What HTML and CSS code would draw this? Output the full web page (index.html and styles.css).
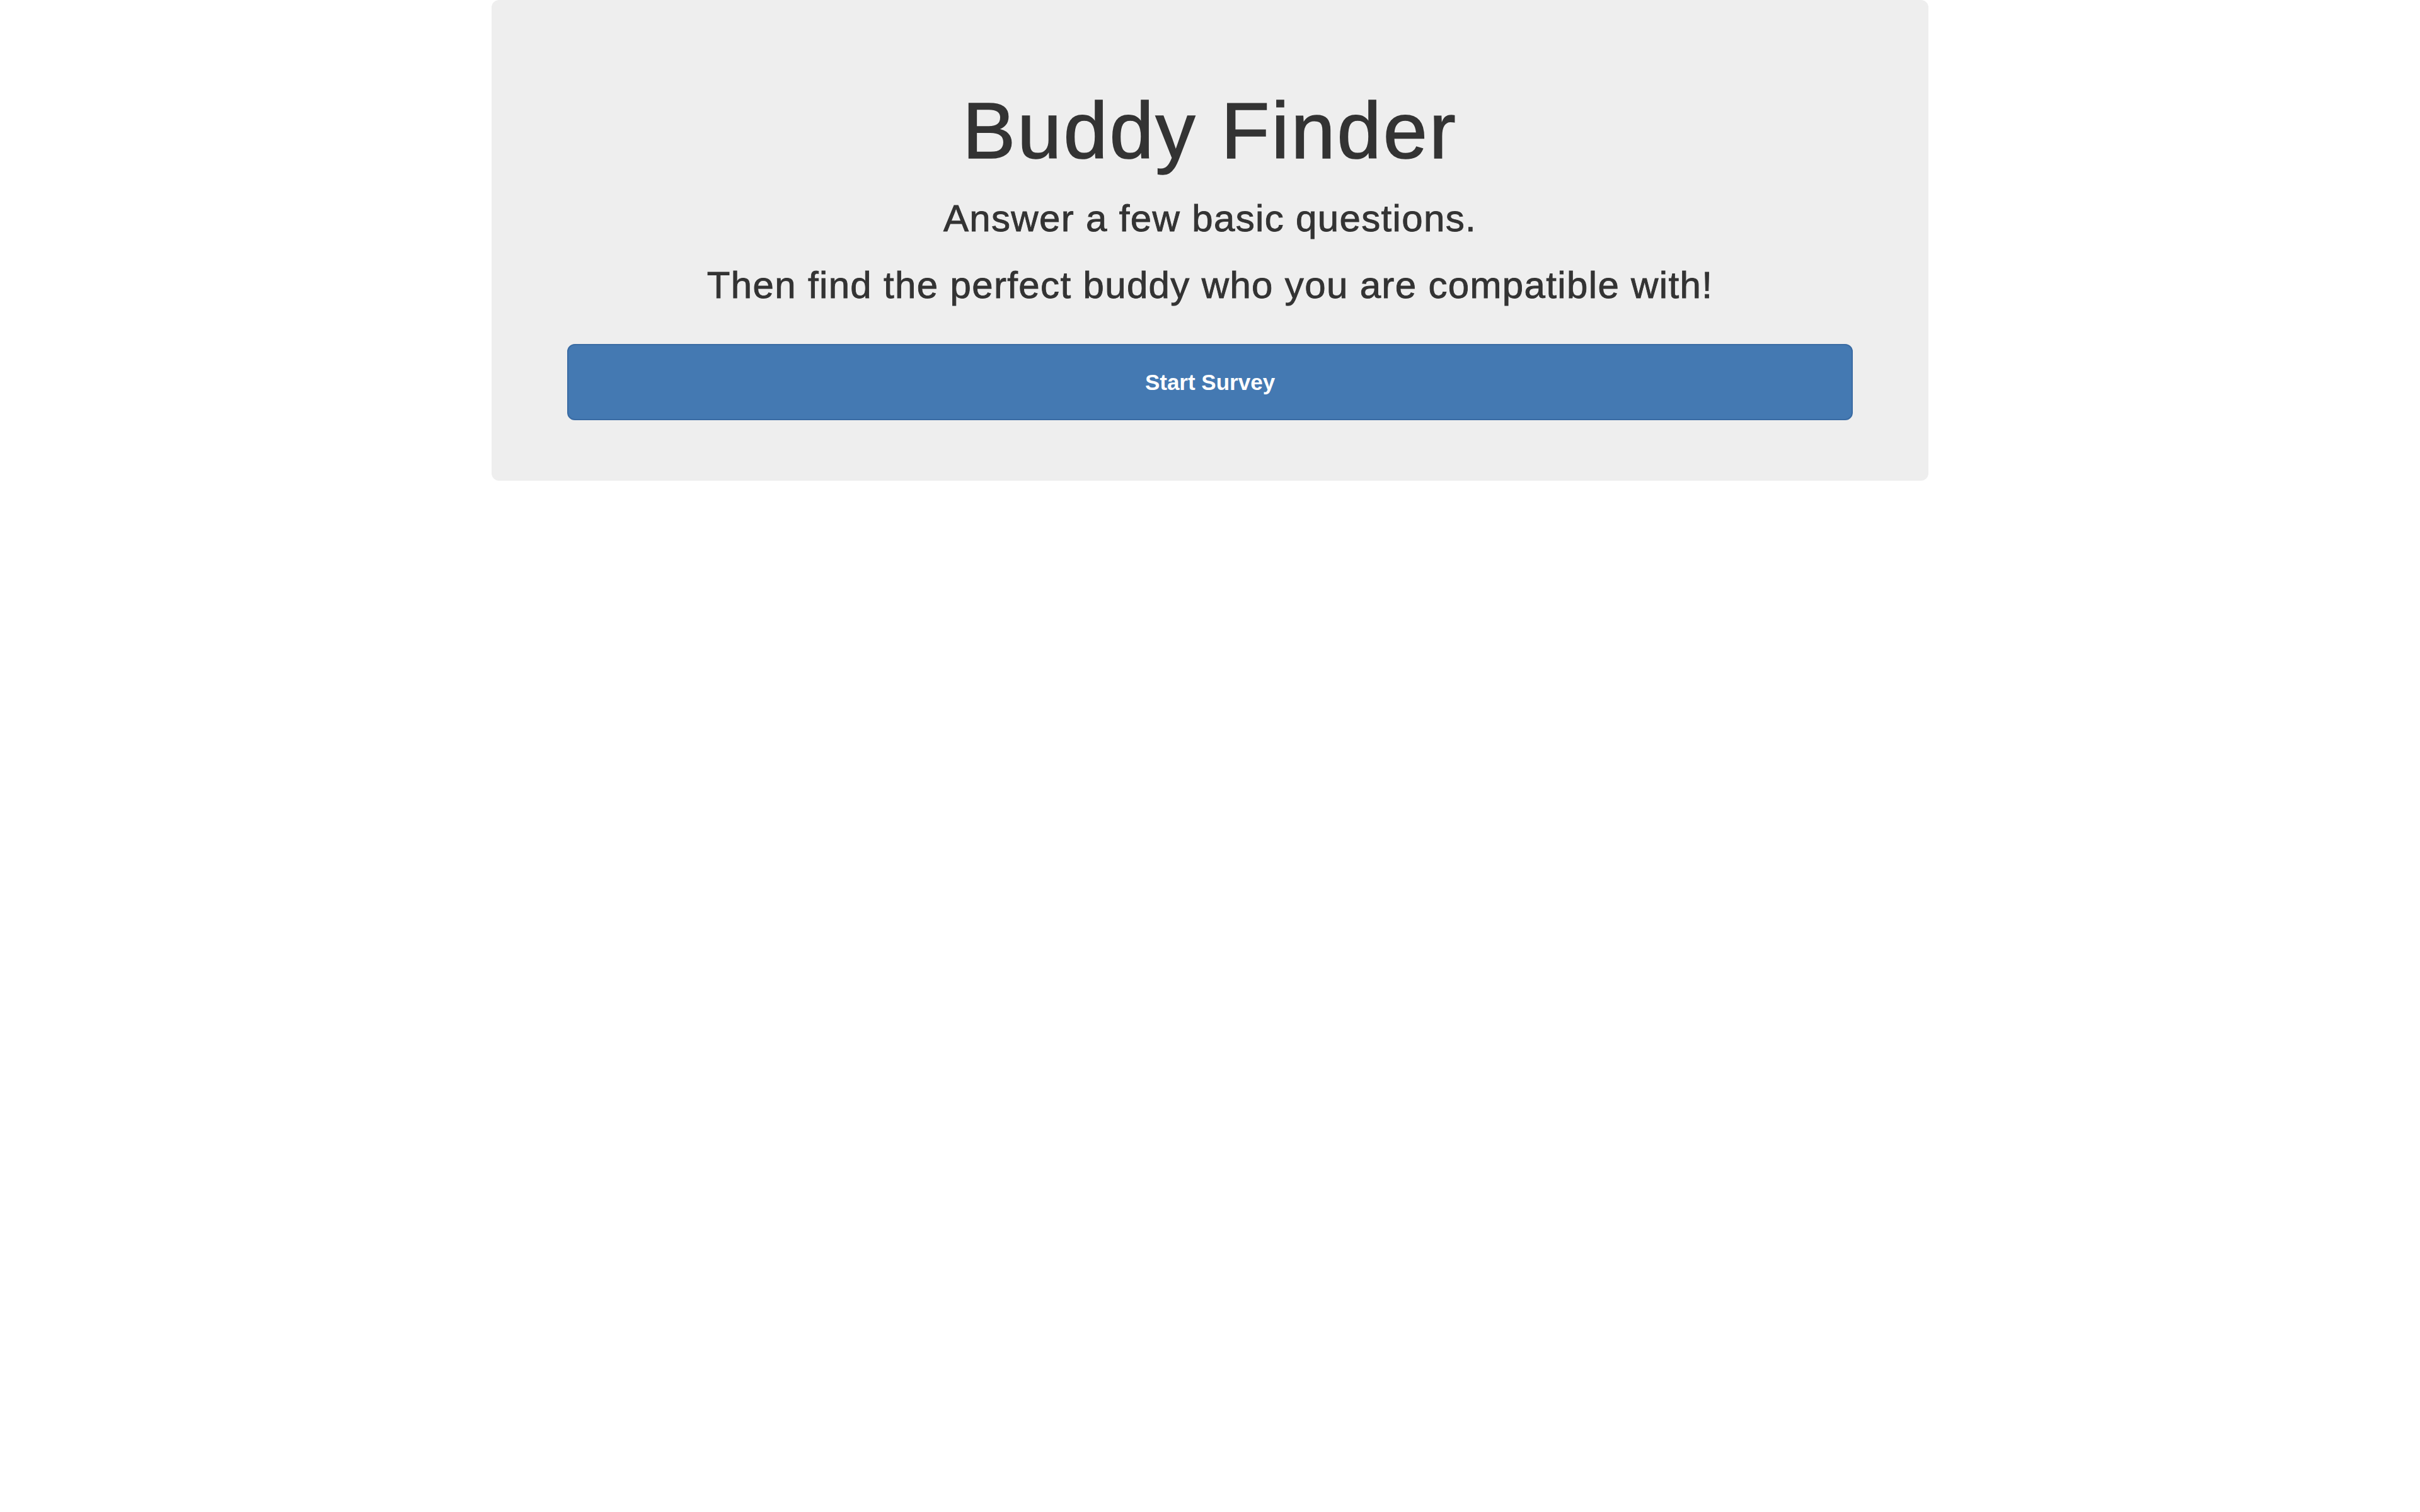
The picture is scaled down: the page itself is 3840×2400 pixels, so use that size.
FILE: index.html
```html
<!DOCTYPE html>
<html lang="en">
<head>
<meta charset="utf-8">
<title>Buddy Finder</title>
<link rel="stylesheet" href="styles.css">
</head>
<body>
<div class="container">
  <div class="jumbotron">
    <h1 class="title">Buddy Finder</h1>
    <h2 class="lead-line first">Answer a few basic questions.</h2>
    <h2 class="lead-line second">Then find the perfect buddy who you are compatible with!</h2>
    <a class="btn-start" href="#">Start Survey</a>
  </div>
</div>
</body>
</html>
```

FILE: styles.css
```css
html, body {
  margin: 0;
  padding: 0;
  background: #ffffff;
}
body {
  font-family: "Liberation Sans", Arial, Helvetica, sans-serif;
  color: #333333;
}
.container {
  width: 2280px;
  margin: 0 auto;
}
.jumbotron {
  background: #eeeeee;
  border-radius: 12px;
  padding: 96px 120px 96px;
  text-align: center;
  display: flex;
  flex-direction: column;
}
.title {
  font-size: 126px;
  font-weight: 400;
  line-height: 1.1;
  letter-spacing: 3px;
  -webkit-text-stroke: 1.6px #333333;
  margin: 43px 0 0;
}
.lead-line {
  font-size: 60px;
  font-weight: 400;
  line-height: 1.1;
  letter-spacing: 1.35px;
  -webkit-text-stroke: 0.9px #333333;
  margin: 0;
}
.lead-line.first {
  margin-top: 36.6px;
}
.lead-line.second {
  margin-top: 40px;
}
.btn-start {
  display: flex;
  align-items: center;
  justify-content: center;
  box-sizing: border-box;
  height: 121px;
  margin-top: 60px;
  background: #4479b2;
  border: 2px solid #3a6ba3;
  border-radius: 12px;
  color: #ffffff;
  font-size: 35px;
  font-weight: 700;
  text-decoration: none;
}
```
